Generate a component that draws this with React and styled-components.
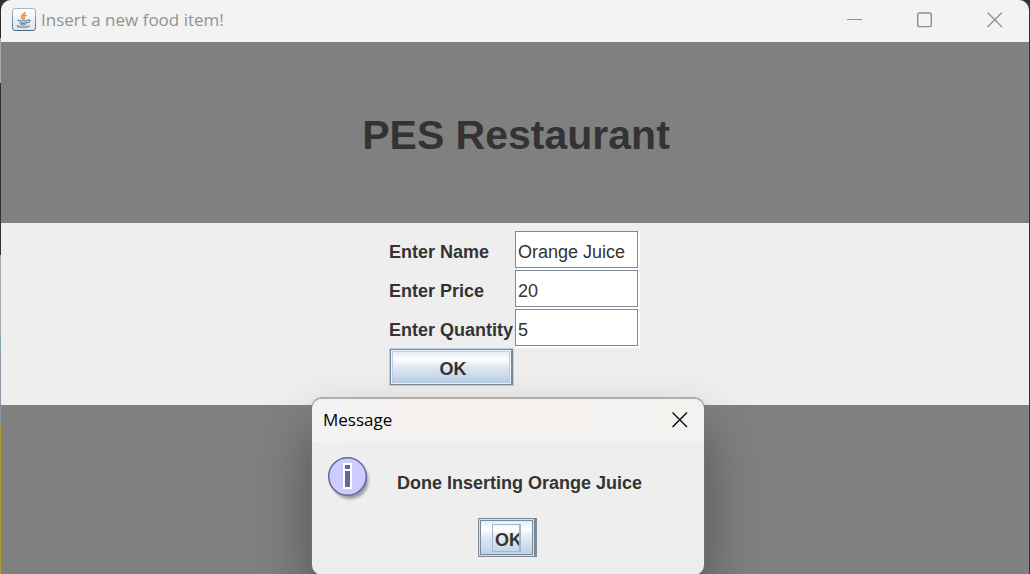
import React from "react";
import styled, { createGlobalStyle } from "styled-components";

const uiFont = `"Liberation Sans", Arial, sans-serif`;
const chromeFont = `"Open Sans", "Noto Sans", sans-serif`;

const GlobalStyle = createGlobalStyle`
  * { box-sizing: border-box; }
  body { margin: 0; background: #333; font-family: ${uiFont}; color: #333; }
  button, input { font: inherit; color: inherit; margin: 0; }
`;

const Desktop = styled.div`
  position: relative;
  display: flex;
  min-height: 100vh;
  padding: 0 1px;
  overflow: hidden;
  background:
    linear-gradient(#2c2c30 38px, #ababab 38px 83px, #333 83px 255px, #a4a8b0 255px 336px, #86abb0 336px 348px, #8c9aa8 348px 426px, #b29a2c 426px)
      left / 1px 100% no-repeat,
    #333;
`;

const AppWindow = styled.section`
  flex: 1;
  display: flex;
  flex-direction: column;
  border-radius: 10px 10px 0 0;
  overflow: hidden;
  background: #808080;
`;

const TitleBar = styled.header`
  display: flex;
  align-items: center;
  height: 42px;
  padding: 0 10px 3px 11px;
  background: #f3f3f3;
  color: #929292;
  font-family: ${chromeFont};
  font-size: 17px;
`;

const WindowTitle = styled.span`
  flex: 1;
  margin-left: 5px;
`;

const WindowButtons = styled.div`
  display: flex;
  gap: 22px;
`;

const IconButton = styled.button`
  display: grid;
  place-items: center;
  width: 48px;
  height: 32px;
  padding: 0;
  border: 0;
  background: transparent;
  color: ${(p) => (p.$active ? "#000" : "#8e8e8e")};
`;

const Banner = styled.div`
  display: grid;
  place-items: center;
  height: 181px;
  padding: 4px 0 0 2px;
`;

const Heading = styled.h1`
  margin: 0;
  font-size: 41px;
  line-height: 48px;
`;

const FormPanel = styled.main`
  display: flex;
  justify-content: center;
  align-items: flex-start;
  height: 182px;
  padding-top: 8px;
  background: #eee;
`;

const Form = styled.form`
  display: grid;
  grid-template-columns: 126px 126px;
  grid-auto-rows: 39px;
  font-size: 18px;
`;

const Label = styled.label`
  align-self: center;
  font-weight: bold;
  white-space: nowrap;
  padding-top: 4px;
`;

const Field = styled.input`
  width: 123px;
  height: 37px;
  padding: 5px 2px 0;
  border: 1px solid #7a8a99;
  border-radius: 0;
  background: #fff;
  box-shadow: 2px 2px 0 #fff;
  outline: none;
`;

const MetalButton = styled.button`
  display: grid;
  place-items: center;
  width: ${(p) => p.$width}px;
  border: 1px solid #7a8a99;
  background: linear-gradient(#dde8f3 0%, #fff 28%, #e4ecf4 45%, #b8cfe5 100%);
  font-size: 18px;
  font-weight: bold;
  outline: none;
`;

const SubmitButton = styled(MetalButton)`
  height: 36px;
  margin: 1px 0 0 1px;
  padding: 4px 0 0 4px;
  border-right-width: 2px;
  box-shadow: inset 0 0 0 1px #f0f4f9, inset 0 0 0 2px #b8cfe5, 0 0 0 1px #b8cfe5;
`;

const DialogButton = styled(MetalButton)`
  height: 39px;
  padding: 0 0 0 1px;
  border-right-width: 3px;
  box-shadow: inset 0 0 0 1px #d3e0ed, inset 0 0 0 2px #7a8a99;
`;

const FocusRing = styled.span`
  display: block;
  width: 29px;
  height: 28px;
  padding: 3px 0 0 2px;
  border: 1px solid #a3b8cc;
  border-right-width: 2px;
  line-height: 24px;
  overflow: hidden;
`;

const Dialog = styled.section`
  position: absolute;
  top: 399px;
  left: 312px;
  width: 392px;
  height: 176px;
  border-radius: 10px;
  background: #eee;
  box-shadow: 0 -1px 0 1px rgba(120, 120, 120, 0.5), 0 30px 56px rgba(0, 0, 0, 0.38);
`;

const DialogBar = styled.header`
  display: flex;
  align-items: center;
  justify-content: space-between;
  height: 43px;
  padding: 0 0 2px 11px;
  border-radius: 10px 10px 0 0;
  background: linear-gradient(90deg, #f3f3f3, #f5f1ee 35%, #f3f2f0);
  color: #000;
  font-family: ${chromeFont};
  font-size: 17px;
`;

const DialogBody = styled.div`
  display: flex;
  align-items: flex-start;
  padding: 14px 14px 0;
`;

const Message = styled.p`
  margin: 16px 0 0 25px;
  font-size: 18px;
  line-height: 22px;
  font-weight: bold;
`;

const DialogActions = styled.div`
  display: flex;
  justify-content: center;
  padding: 16px 2px 0 0;
`;

const fields = [
  { id: "name", label: "Enter Name", value: "Orange Juice" },
  { id: "price", label: "Enter Price", value: "20" },
  { id: "quantity", label: "Enter Quantity", value: "5" },
];

function JavaIcon() {
  return (
    <svg width="24" height="23" viewBox="0 0 24 23" aria-hidden="true">
      <defs>
        <linearGradient id="javaFrame" x1="0" y1="0" x2="0" y2="1">
          <stop offset="0" stopColor="#a9b8c2" />
          <stop offset="1" stopColor="#4c6c82" />
        </linearGradient>
        <linearGradient id="javaFill" x1="0" y1="0" x2="0" y2="1">
          <stop offset="0" stopColor="#fff" />
          <stop offset="1" stopColor="#dfe5e8" />
        </linearGradient>
      </defs>
      <rect x="0.5" y="0.5" width="23" height="22" rx="2.5" fill="url(#javaFill)" stroke="url(#javaFrame)" />
      <path d="M12.6 4c1 2-3.400 3-3.200 5 .1 1 1.200 1.800 1.800 2.600M14.400 6.800c-2 .8-2.900 1.600-2.400 2.600.4.800.8 1.200-.2 2.200" fill="none" stroke="#ee8434" strokeWidth="1.500" />
      <path d="M7 11.800c-2 .8 0 1.200 4 1.200 3 0 4.500-.4 5-.8M16 11.900c3-.6 2.500 2.400-.7 3M7.500 14.600c2 .8 5.500.8 7.500 0M8.300 16.500c1.800.7 4 .7 6 0M7 17.500c-2.500.3-2.500 1.300 1 1.600 4 .4 9.500 0 9.500-1.500" fill="none" stroke="#5d829c" strokeWidth="1.200" />
    </svg>
  );
}

function CloseIcon() {
  return (
    <svg width="16" height="16" viewBox="0 0 16 16" fill="none" stroke="currentColor" strokeWidth="1.300" aria-hidden="true">
      <path d="M0.500 0.500L15 15M15 0.500L0.500 15" />
    </svg>
  );
}

function InfoIcon() {
  return (
    <svg width="46" height="46" viewBox="0 0 46 46" aria-hidden="true">
      <defs>
        <filter id="infoShadow" x="-20%" y="-20%" width="150%" height="150%">
          <feGaussianBlur stdDeviation="1.800" />
        </filter>
      </defs>
      <circle cx="24" cy="24.500" r="18.500" fill="#777" opacity="0.700" filter="url(#infoShadow)" />
      <circle cx="21.500" cy="20.500" r="18.800" fill="#ccf" stroke="#669" strokeWidth="1.500" />
      <path d="M17 7h9v26h-9z" fill="#fff" />
      <path d="M19 9h5v4h-5zM19 15h5v16h-5z" fill="#669" />
    </svg>
  );
}

export default function App() {
  return (
    <>
      <GlobalStyle />
      <Desktop>
        <AppWindow>
          <TitleBar>
            <JavaIcon />
            <WindowTitle>Insert a new food item!</WindowTitle>
            <WindowButtons>
              <IconButton type="button" aria-label="Minimize">
                <svg width="16" height="15" viewBox="0 0 16 15" aria-hidden="true">
                  <path d="M0 7.500h15" stroke="currentColor" />
                </svg>
              </IconButton>
              <IconButton type="button" aria-label="Maximize">
                <svg width="16" height="16" viewBox="0 0 16 16" aria-hidden="true">
                  <rect x="0.700" y="1" width="13.600" height="13.600" rx="1.500" fill="none" stroke="currentColor" strokeWidth="1.400" />
                </svg>
              </IconButton>
              <IconButton type="button" aria-label="Close">
                <CloseIcon />
              </IconButton>
            </WindowButtons>
          </TitleBar>
          <Banner>
            <Heading>PES Restaurant</Heading>
          </Banner>
          <FormPanel>
            <Form onSubmit={(e) => e.preventDefault()}>
              {fields.map((f) => (
                <React.Fragment key={f.id}>
                  <Label htmlFor={f.id}>{f.label}</Label>
                  <Field id={f.id} defaultValue={f.value} />
                </React.Fragment>
              ))}
              <SubmitButton type="submit" $width={123}>OK</SubmitButton>
            </Form>
          </FormPanel>
        </AppWindow>
        <Dialog role="dialog" aria-labelledby="dialog-title">
          <DialogBar>
            <span id="dialog-title">Message</span>
            <IconButton type="button" aria-label="Close message" $active>
              <CloseIcon />
            </IconButton>
          </DialogBar>
          <DialogBody>
            <InfoIcon />
            <Message>Done Inserting Orange Juice</Message>
          </DialogBody>
          <DialogActions>
            <DialogButton type="button" $width={59}>
              <FocusRing>OK</FocusRing>
            </DialogButton>
          </DialogActions>
        </Dialog>
      </Desktop>
    </>
  );
}
